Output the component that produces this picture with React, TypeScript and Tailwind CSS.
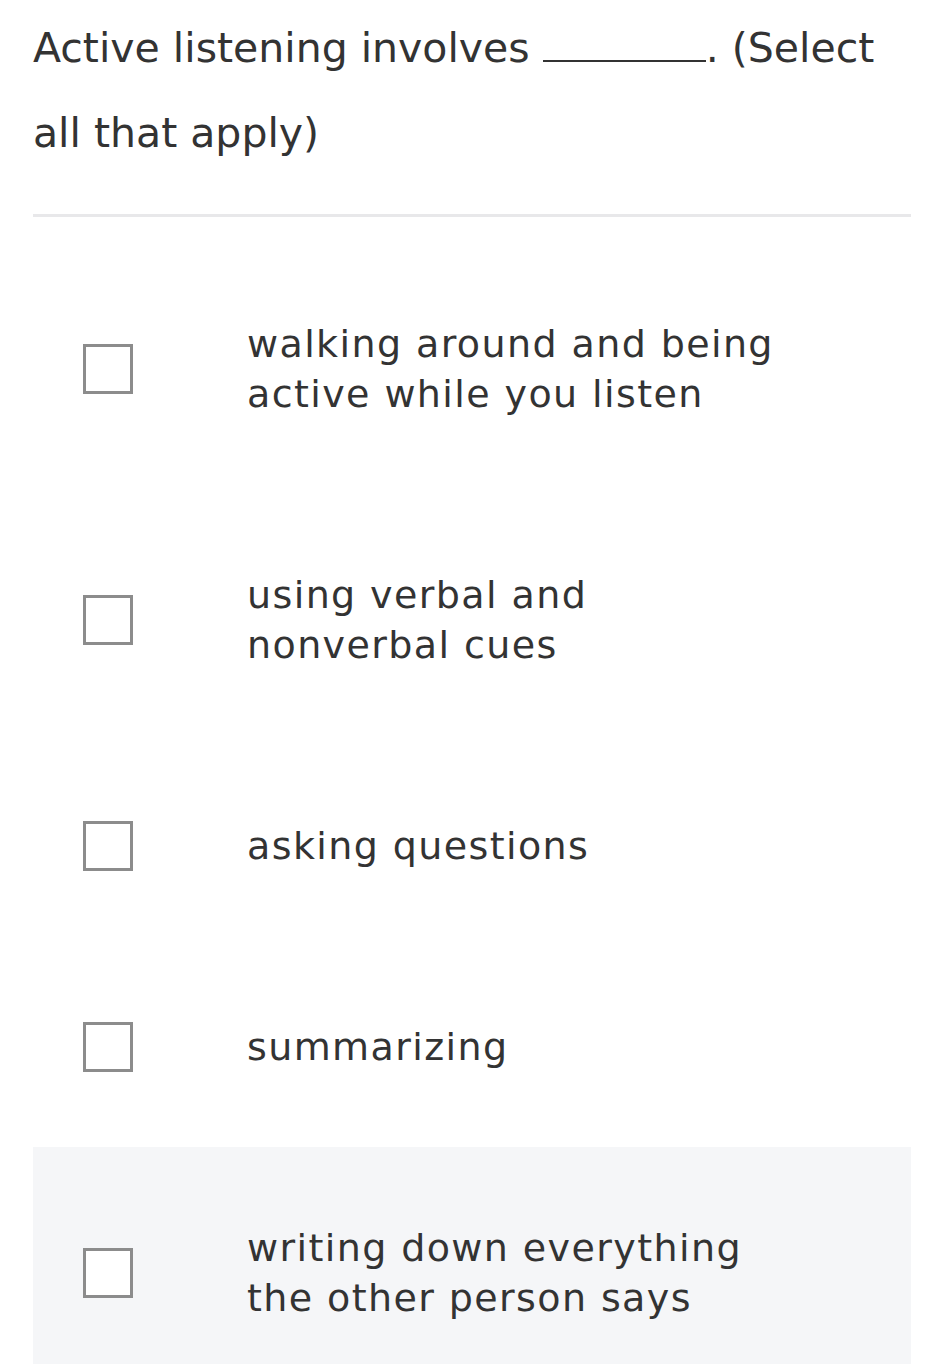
import { useState } from 'react'

const options = [
  'walking around and being active while you listen',
  'using verbal and nonverbal cues',
  'asking questions',
  'summarizing',
  'writing down everything the other person says',
]

export default function App() {
  const [checked, setChecked] = useState<boolean[]>(options.map(() => false))
  const hovered = options.length - 1

  return (
    <div className="min-h-screen bg-white pl-[33px] pr-[28px] pt-[6px] text-[#333333] [font-family:'DejaVu_Sans',sans-serif]">
      <h2 className="text-[41px] leading-[85px] font-normal tracking-[0px]">
        Active listening involves{' '}
        <span className="inline-block w-[163px] border-b-2 border-[#333333] align-baseline" />
        . (Select all that apply)
      </h2>

      <div className="mt-[38px] h-[3px] bg-[#e8e8ea]" />

      <ul className="mt-[26px]">
        {options.map((label, i) => (
          <li
            key={label}
            className={`flex items-center py-[75.5px] ${i === hovered ? 'bg-[#f5f6f8]' : ''}`}
            onClick={() => setChecked(c => c.map((v, j) => (j === i ? !v : v)))}
          >
            <div className="w-[214px] shrink-0 pl-[50px]">
              <div className="w-[50px] h-[50px] border-[3px] border-[#8c8c8c] bg-white" />
            </div>
            <span className="text-[38px] leading-[50px] tracking-[1.4px] max-w-[545px]">{label}</span>
          </li>
        ))}
      </ul>
    </div>
  )
}
